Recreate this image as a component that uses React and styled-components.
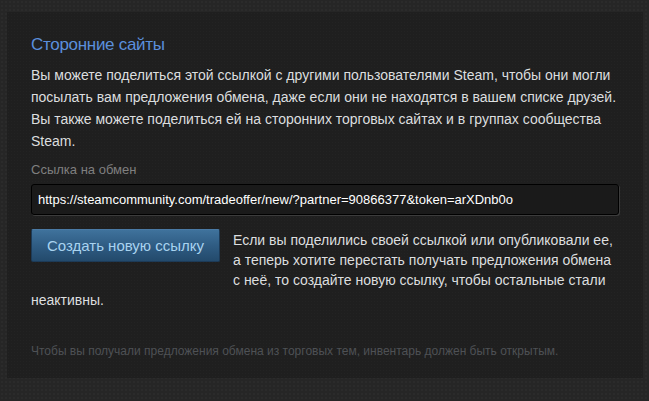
import React from 'react';
import styled, { createGlobalStyle } from 'styled-components';

const GlobalStyle = createGlobalStyle`
  html, body {
    margin: 0;
    padding: 0;
    background-color: #262626;
  }
  body {
    font-family: 'Liberation Sans', Arial, sans-serif;
  }
`;

// Outer page with the dark patterned backdrop
const Page = styled.div`
  width: 649px;
  height: 401px;
  padding: 12px 6px 0 7px;
  box-sizing: border-box;
  background-color: #262626;
  background-image: radial-gradient(rgba(255, 255, 255, 0.025) 1px, transparent 1px);
  background-size: 4px 4px;
`;

const Panel = styled.section`
  background-color: #1f1f1f;
  background-image: radial-gradient(rgba(255, 255, 255, 0.02) 1px, transparent 1px);
  background-size: 3px 3px;
  padding: 21px 24px 18px 24px;
  height: 366px;
  box-sizing: border-box;
`;

const Title = styled.h2`
  margin: 0 0 7px;
  font-size: 17px;
  line-height: 24px;
  font-weight: 400;
  letter-spacing: -0.3px;
  color: #5b8fdc;
`;

const Intro = styled.p`
  margin: 0;
  font-size: 14px;
  line-height: 22px;
  color: #dcdedf;
`;

const FieldLabel = styled.div`
  margin-top: 9px;
  font-size: 13px;
  line-height: 18px;
  color: #7f7f7f;
`;

const LinkBox = styled.div`
  margin-top: 5px;
  height: 31px;
  padding: 0 6px;
  display: flex;
  align-items: center;
  background-color: #1a1a1a;
  border: 1px solid #000;
  border-radius: 3px;
  box-shadow: 1px 1px 0 #3c3c3c;
  font-size: 13px;
  color: #ffffff;
  white-space: nowrap;
  overflow: hidden;
  box-sizing: border-box;
`;

const ResetRow = styled.div`
  margin-top: 14px;
  padding-top: 1px;
`;

const NewLinkButton = styled.button`
  float: left;
  width: 189px;
  height: 33px;
  margin: -1px 13px 16px 0;
  padding: 0;
  border: 1px solid #1d3b58;
  border-top-color: #4a7aa5;
  border-radius: 2px;
  background: linear-gradient(to bottom, #3f729c 0%, #2f5c83 50%, #234a6c 100%);
  font-family: 'Liberation Sans', Arial, sans-serif;
  font-size: 15px;
  color: #a8d3f0;
  cursor: pointer;
`;

const ResetText = styled.span`
  font-size: 14px;
  line-height: 20px;
  color: #dcdedf;
`;

const Note = styled.p`
  clear: both;
  margin: 0;
  padding-top: 33px;
  font-size: 12px;
  line-height: 16px;
  color: #4e5155;
`;

const App = () => (
  <>
    <GlobalStyle />
    <Page>
      <Panel>
        <Title>Сторонние сайты</Title>
        <Intro>
          Вы можете поделиться этой ссылкой с другими пользователями Steam, чтобы они могли
          посылать вам предложения обмена, даже если они не находятся в вашем списке друзей.
          Вы также можете поделиться ей на сторонних торговых сайтах и в группах сообщества
          Steam.
        </Intro>
        <FieldLabel>Ссылка на обмен</FieldLabel>
        <LinkBox>https://steamcommunity.com/tradeoffer/new/?partner=90866377&amp;token=arXDnb0o</LinkBox>
        <ResetRow>
          <NewLinkButton type="button">Создать новую ссылку</NewLinkButton>
          <ResetText>
            Если вы поделились своей ссылкой или опубликовали ее, а теперь хотите перестать
            получать предложения обмена с неё, то создайте новую ссылку, чтобы остальные стали
            неактивны.
          </ResetText>
        </ResetRow>
        <Note>
          Чтобы вы получали предложения обмена из торговых тем, инвентарь должен быть открытым.
        </Note>
      </Panel>
    </Page>
  </>
);

export default App;
